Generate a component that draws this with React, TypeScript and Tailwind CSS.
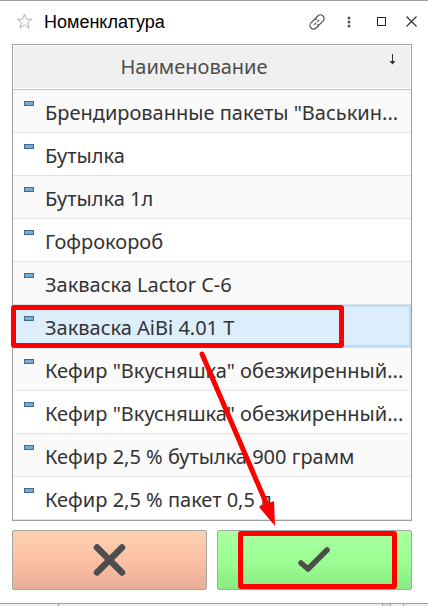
import React from "react";

const items = [
  'Брендированные пакеты "Васькин...',
  "Бутылка",
  "Бутылка 1л",
  "Гофрокороб",
  "Закваска Lactor C-6",
  "Закваска AiBi 4.01 T",
  'Кефир "Вкусняшка" обезжиренный...',
  'Кефир "Вкусняшка" обезжиренный...',
  "Кефир 2,5 % бутылка 900 грамм",
  "Кефир 2,5 % пакет 0,5 л",
];

const selected = 5;

function TitleBar() {
  return (
    <header className="flex h-[43px] items-center pr-[9px] pb-0.5 pl-3">
      <button type="button" aria-label="В избранное" className="flex w-6 items-center pl-1">
        <svg className="shrink-0" width="17" height="17" viewBox="0 0 17 17" fill="none" stroke="#aab0b8" strokeWidth="1">
          <path d="M8.500 1.200l1.900 5h5.400l-4.300 3.300 1.600 5.600-4.600-3.300-4.600 3.300 1.600-5.600L1.200 6.200h5.400z" />
        </svg>
      </button>
      <h1 className="grow pl-2 font-['Liberation_Sans',sans-serif] text-[18px] leading-6 text-black">Номенклатура</h1>
      <div className="flex items-center gap-3">
        <button type="button" aria-label="Ссылка" className="flex w-5 justify-center">
          <svg className="shrink-0" width="16" height="16" viewBox="0 0 16 16" fill="none" stroke="#555" strokeWidth="1.200" strokeLinecap="round">
            <path d="M6.300 4.500l2.500-2.500a3.600 3.600 0 0 1 5.200 5.200l-2.700 2.600a3.400 3.400 0 0 1-2.800 1" />
            <path d="M9.700 11.500L7.200 14A3.600 3.600 0 0 1 2 8.800l2.700-2.600a3.400 3.400 0 0 1 2.800-1" />
            <path d="M5.600 10.400l4.800-4.800" strokeDasharray="1.800 2.200" />
          </svg>
        </button>
        <button type="button" aria-label="Ещё" className="flex w-5 justify-center">
          <svg width="4" height="12" viewBox="0 0 4 12" fill="#555">
            <circle cx="2" cy="2" r="1.500" />
            <circle cx="2" cy="6" r="1.500" />
            <circle cx="2" cy="10" r="1.500" />
          </svg>
        </button>
        <button type="button" aria-label="Развернуть" className="flex w-5 justify-center">
          <span className="size-[9px] border border-[#222]" />
        </button>
        <button type="button" aria-label="Закрыть" className="flex w-4 justify-center">
          <svg width="11" height="11" viewBox="0 0 11 11" fill="none" stroke="#333" strokeWidth="1.200">
            <path d="M.5 .5l10 10M10.500 .5l-10 10" />
          </svg>
        </button>
      </div>
    </header>
  );
}

function ItemTable() {
  return (
    <div className="mr-4 ml-3 border border-[#a0a0a0]">
      <table className="w-full table-fixed border-separate border-spacing-0 text-xl leading-6">
        <thead>
          <tr>
            <th
              scope="col"
              className="relative h-[45px] border-b border-[#c4c4c4] bg-[#f0f0f0] p-0 pr-9 text-center font-normal text-[#4d4d4d] shadow-[inset_0_0_0_1px_#ffffff]"
            >
              Наименование
              <svg className="absolute top-[9px] right-3.5" width="9" height="12" viewBox="0 0 9 12" fill="none" stroke="#333">
                <path d="M4.500 0v9" />
                <path d="M1.500 7h6l-3 3.500z" fill="#333" stroke="none" />
              </svg>
            </th>
          </tr>
        </thead>
        <tbody>
          {items.map((name, i) => (
            <tr key={i} className={i % 2 ? "bg-white" : "bg-[#fafafa]"}>
              <td
                className={
                  i === selected
                    ? "relative h-[43px] border-b border-[#e2e2e2] bg-[#dceefc] p-0 shadow-[inset_0_0_0_2px_#b9dcf8]"
                    : "h-[43px] border-b border-[#e2e2e2] p-0"
                }
              >
                <div className="flex items-start gap-[11px] pl-[11px]">
                  <span className="mt-1 h-[5px] w-2.5 shrink-0 border border-[#416b8c] bg-[#79acd3]" />
                  <span className="grow pt-1 whitespace-nowrap text-[#333]">{name}</span>
                </div>
                {i === selected && (
                  <span className="pointer-events-none absolute top-0 -left-0.5 h-[43px] w-[333px] rounded-[3px] border-5 border-[#ff0000]" />
                )}
              </td>
            </tr>
          ))}
        </tbody>
      </table>
    </div>
  );
}

export default function App() {
  return (
    <div className="bg-[#eeeeee] font-['Noto_Sans',sans-serif]">
      <main className="relative border-y border-[#a0a0a0] bg-white pb-[13px]">
        <TitleBar />
        <ItemTable />
        <div className="mt-[9px] mr-4 ml-3 flex gap-2.5">
          <button
            type="button"
            aria-label="Отмена"
            className="flex h-[60px] flex-1 items-center justify-center rounded-xs border border-[#a6a6a0] bg-linear-to-b from-[#fcd0b2] via-[#fcc0a6] to-[#e9ae98]"
          >
            <svg width="34" height="34" viewBox="0 0 34 34" fill="none" stroke="#4d4d4d" strokeWidth="6.500" strokeLinecap="round">
              <path d="M4 4.500l25 25M29 4.500l-25 25" />
            </svg>
          </button>
          <button
            type="button"
            aria-label="Выбрать"
            className="relative flex h-[60px] flex-1 items-center justify-center rounded-xs border border-[#a3aba0] bg-linear-to-b from-[#aaffa2] via-[#9cff94] to-[#8cea84]"
          >
            <svg width="34" height="28" viewBox="0 0 34 28" fill="none" stroke="#4d4d4d" strokeWidth="5.500" strokeLinecap="round" strokeLinejoin="round">
              <path d="M3 17l7 6L29 4" />
            </svg>
            <span className="pointer-events-none absolute inset-y-0 right-3.5 left-5 rounded-[3px] border-5 border-[#ff0000]" />
          </button>
        </div>
        <svg className="pointer-events-none absolute top-[350px] left-[198px]" width="80" height="178" viewBox="0 0 80 178">
          <path d="M4 3l65 151" stroke="#ff0000" strokeWidth="5" strokeLinecap="round" />
          <path d="M61 156l15-6 1 25z" fill="#ff0000" />
        </svg>
      </main>
      <div className="flex h-0.5">
        <span className="w-[59px] border-r border-[#a0a0a0]" />
        <span className="grow" />
        <span className="w-[9px] border-x border-[#a0a0a0] bg-[#d8d8d8]" />
        <span className="w-[13px] border-r border-[#a0a0a0]" />
        <span className="w-6" />
      </div>
    </div>
  );
}
